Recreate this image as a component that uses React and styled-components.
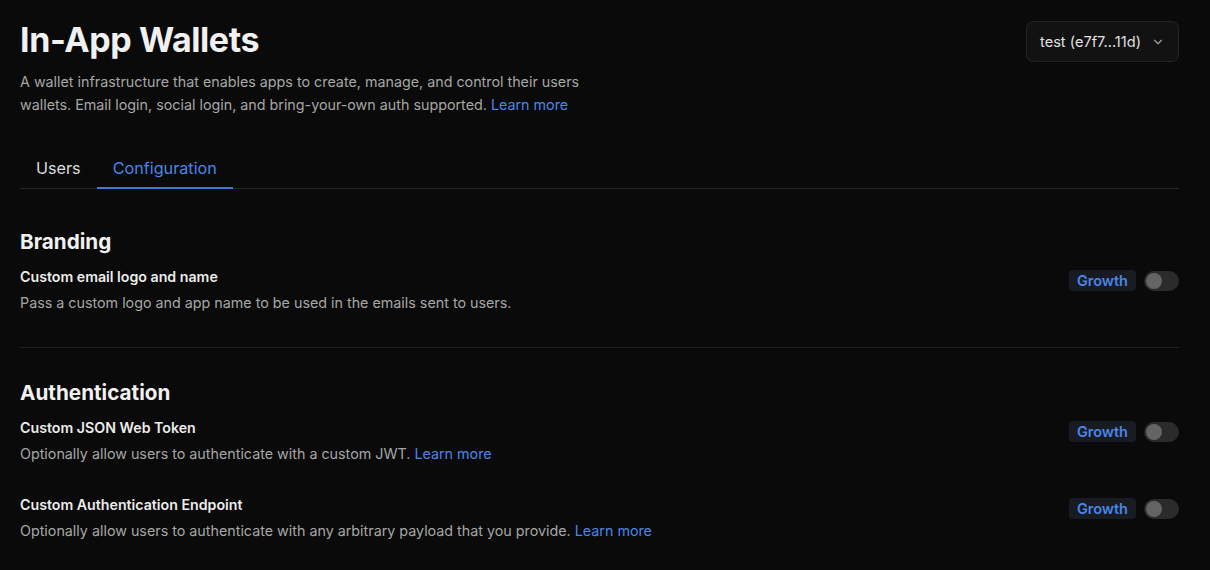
import React from "react";
import styled, { createGlobalStyle } from "styled-components";

const GlobalStyle = createGlobalStyle`
  html, body {
    margin: 0;
    padding: 0;
    background: #0a0a0a;
    color: #ededed;
    font-family: Inter, "Noto Sans", sans-serif;
  }
`;

const Page = styled.div`
  padding: 20px 31px 0 20px;
  box-sizing: border-box;
  width: 1210px;
  height: 570px;
  overflow: hidden;
`;

const Header = styled.div`
  display: flex;
  justify-content: space-between;
  align-items: flex-start;
`;

const Title = styled.h1`
  margin: 0;
  font-size: 34px;
  line-height: 40px;
  font-weight: 700;
  letter-spacing: -0.4px;
  color: #f1f1f1;
`;

const Intro = styled.p`
  margin: 10px 0 0;
  max-width: 600px;
  font-size: 14.3px;
  line-height: 23px;
  color: #a6a6a6;
`;

const Link = styled.a`
  color: #4a86e8;
  text-decoration: none;
`;

const Select = styled.button`
  display: flex;
  align-items: center;
  gap: 10px;
  height: 41px;
  padding: 0 13px;
  margin-top: 1px;
  background: #121212;
  border: 1px solid #232323;
  border-radius: 7px;
  color: #e0e0e0;
  font-family: inherit;
  font-size: 14.6px;
`;

const Tabs = styled.div`
  display: flex;
  margin-top: 40px;
  border-bottom: 1px solid #262626;
`;

const Tab = styled.div`
  padding: 0 16px 9px;
  font-size: 16.2px;
  line-height: 24px;
  color: ${(p) => (p.$active ? "#4a86e8" : "#dcdcdc")};
  box-shadow: ${(p) => (p.$active ? "inset 0 -2px 0 #3f7ad9" : "none")};
  margin-bottom: -1px;
`;

const Section = styled.section`
  padding: 39px 0 0;
  & + & {
    border-top: 1px solid #1f1f1f;
    margin-top: 33px;
    padding-top: 31px;
  }
`;

const SectionTitle = styled.h2`
  margin: 0;
  font-size: 20.7px;
  line-height: 28px;
  font-weight: 700;
  color: #f1f1f1;
`;

const Row = styled.div`
  display: flex;
  justify-content: space-between;
  align-items: flex-start;
  margin-top: ${(p) => (p.$first ? "10px" : "29px")};
`;

const RowTitle = styled.div`
  font-size: 14.2px;
  line-height: 22px;
  font-weight: 600;
  color: #ececec;
`;

const RowDesc = styled.div`
  margin-top: 4px;
  font-size: 14.3px;
  line-height: 22px;
  color: #a6a6a6;
`;

const Controls = styled.div`
  display: flex;
  align-items: center;
  gap: 8px;
  margin-top: 4px;
`;

const Badge = styled.span`
  display: inline-flex;
  align-items: center;
  height: 21px;
  padding: 0 8px;
  border-radius: 4px;
  background: #181b21;
  color: #4a86e8;
  font-size: 14.5px;
  font-weight: 600;
`;

const Switch = styled.span`
  position: relative;
  display: inline-block;
  width: 35px;
  height: 20px;
  border-radius: 10px;
  background: #2b2b2b;
  &::after {
    content: "";
    position: absolute;
    left: 2px;
    top: 2px;
    width: 16px;
    height: 16px;
    border-radius: 50%;
    background: #646464;
  }
`;

const Chevron = () => (
  <svg width="14" height="14" viewBox="0 0 24 24" fill="none" stroke="#a0a0a0" strokeWidth="2" strokeLinecap="round" strokeLinejoin="round">
    <path d="m6 9 6 6 6-6" />
  </svg>
);

function Setting({ title, children, first }) {
  return (
    <Row $first={first}>
      <div>
        <RowTitle>{title}</RowTitle>
        <RowDesc>{children}</RowDesc>
      </div>
      <Controls>
        <Badge>Growth</Badge>
        <Switch />
      </Controls>
    </Row>
  );
}

export default function App() {
  return (
    <Page>
      <GlobalStyle />
      <Header>
        <div>
          <Title>In-App Wallets</Title>
          <Intro>
            A wallet infrastructure that enables apps to create, manage, and control their users
            wallets. Email login, social login, and bring-your-own auth supported.{" "}
            <Link href="#">Learn more</Link>
          </Intro>
        </div>
        <Select>
          test (e7f7...11d) <Chevron />
        </Select>
      </Header>

      <Tabs>
        <Tab>Users</Tab>
        <Tab $active>Configuration</Tab>
      </Tabs>

      <Section>
        <SectionTitle>Branding</SectionTitle>
        <Setting first title="Custom email logo and name">
          Pass a custom logo and app name to be used in the emails sent to users.
        </Setting>
      </Section>

      <Section>
        <SectionTitle>Authentication</SectionTitle>
        <Setting first title="Custom JSON Web Token">
          Optionally allow users to authenticate with a custom JWT. <Link href="#">Learn more</Link>
        </Setting>
        <Setting title="Custom Authentication Endpoint">
          Optionally allow users to authenticate with any arbitrary payload that you provide.{" "}
          <Link href="#">Learn more</Link>
        </Setting>
      </Section>
    </Page>
  );
}
